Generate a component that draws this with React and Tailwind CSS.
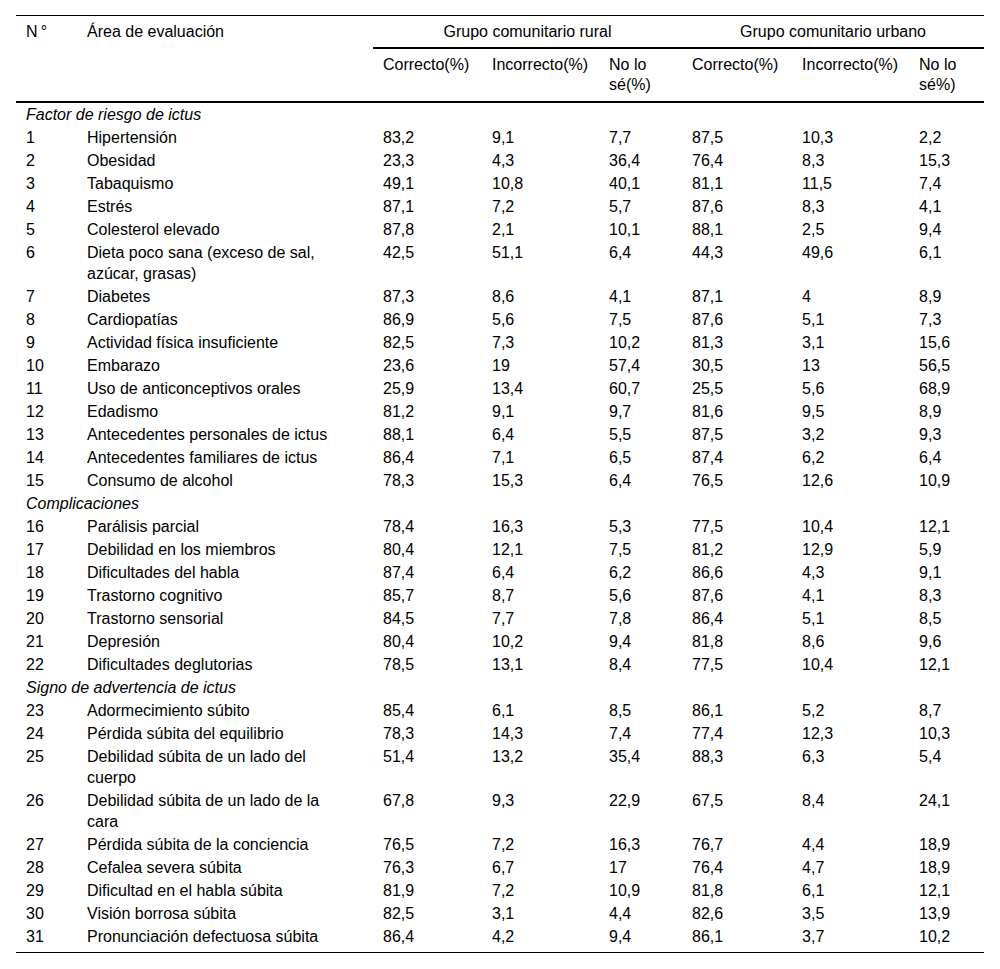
const sections = [
  {
    title: "Factor de riesgo de ictus",
    rows: [
      ["1", "Hipertensión", "83,2", "9,1", "7,7", "87,5", "10,3", "2,2"],
      ["2", "Obesidad", "23,3", "4,3", "36,4", "76,4", "8,3", "15,3"],
      ["3", "Tabaquismo", "49,1", "10,8", "40,1", "81,1", "11,5", "7,4"],
      ["4", "Estrés", "87,1", "7,2", "5,7", "87,6", "8,3", "4,1"],
      ["5", "Colesterol elevado", "87,8", "2,1", "10,1", "88,1", "2,5", "9,4"],
      ["6", "Dieta poco sana (exceso de sal, azúcar, grasas)", "42,5", "51,1", "6,4", "44,3", "49,6", "6,1"],
      ["7", "Diabetes", "87,3", "8,6", "4,1", "87,1", "4", "8,9"],
      ["8", "Cardiopatías", "86,9", "5,6", "7,5", "87,6", "5,1", "7,3"],
      ["9", "Actividad física insuficiente", "82,5", "7,3", "10,2", "81,3", "3,1", "15,6"],
      ["10", "Embarazo", "23,6", "19", "57,4", "30,5", "13", "56,5"],
      ["11", "Uso de anticonceptivos orales", "25,9", "13,4", "60,7", "25,5", "5,6", "68,9"],
      ["12", "Edadismo", "81,2", "9,1", "9,7", "81,6", "9,5", "8,9"],
      ["13", "Antecedentes personales de ictus", "88,1", "6,4", "5,5", "87,5", "3,2", "9,3"],
      ["14", "Antecedentes familiares de ictus", "86,4", "7,1", "6,5", "87,4", "6,2", "6,4"],
      ["15", "Consumo de alcohol", "78,3", "15,3", "6,4", "76,5", "12,6", "10,9"],
    ],
  },
  {
    title: "Complicaciones",
    rows: [
      ["16", "Parálisis parcial", "78,4", "16,3", "5,3", "77,5", "10,4", "12,1"],
      ["17", "Debilidad en los miembros", "80,4", "12,1", "7,5", "81,2", "12,9", "5,9"],
      ["18", "Dificultades del habla", "87,4", "6,4", "6,2", "86,6", "4,3", "9,1"],
      ["19", "Trastorno cognitivo", "85,7", "8,7", "5,6", "87,6", "4,1", "8,3"],
      ["20", "Trastorno sensorial", "84,5", "7,7", "7,8", "86,4", "5,1", "8,5"],
      ["21", "Depresión", "80,4", "10,2", "9,4", "81,8", "8,6", "9,6"],
      ["22", "Dificultades deglutorias", "78,5", "13,1", "8,4", "77,5", "10,4", "12,1"],
    ],
  },
  {
    title: "Signo de advertencia de ictus",
    rows: [
      ["23", "Adormecimiento súbito", "85,4", "6,1", "8,5", "86,1", "5,2", "8,7"],
      ["24", "Pérdida súbita del equilibrio", "78,3", "14,3", "7,4", "77,4", "12,3", "10,3"],
      ["25", "Debilidad súbita de un lado del cuerpo", "51,4", "13,2", "35,4", "88,3", "6,3", "5,4"],
      ["26", "Debilidad súbita de un lado de la cara", "67,8", "9,3", "22,9", "67,5", "8,4", "24,1"],
      ["27", "Pérdida súbita de la conciencia", "76,5", "7,2", "16,3", "76,7", "4,4", "18,9"],
      ["28", "Cefalea severa súbita", "76,3", "6,7", "17", "76,4", "4,7", "18,9"],
      ["29", "Dificultad en el habla súbita", "81,9", "7,2", "10,9", "81,8", "6,1", "12,1"],
      ["30", "Visión borrosa súbita", "82,5", "3,1", "4,4", "82,6", "3,5", "13,9"],
      ["31", "Pronunciación defectuosa súbita", "86,4", "4,2", "9,4", "86,1", "3,7", "10,2"],
    ],
  },
];

const subHeads = ["Correcto(%)", "Incorrecto(%)", "No lo sé(%)", "Correcto(%)", "Incorrecto(%)", "No lo sé%)"];

export default function App() {
  return (
    <div className="bg-white px-4 pt-[15px] pb-4 text-black font-['Liberation_Sans',Arial,sans-serif] text-[16px]">
      <table className="w-[968px] table-fixed border-collapse border-t border-black">
        <colgroup>
          <col className="w-[61px]" />
          <col className="w-[296px]" />
          <col className="w-[109px]" />
          <col className="w-[117px]" />
          <col className="w-[83px]" />
          <col className="w-[110px]" />
          <col className="w-[117px]" />
          <col className="w-[75px]" />
        </colgroup>
        <thead className="border-b-2 border-black">
          <tr>
            <th className="pl-2.5 pt-[5px] pb-[5px] text-left font-normal leading-[21px] align-top">N{"\u2009"}°</th>
            <th className="pl-2.5 pt-[5px] pb-[5px] text-left font-normal leading-[21px] align-top">Área de evaluación</th>
            <th colSpan={3} className="pt-[5px] pb-[5px] text-center font-normal leading-[21px] border-b-2 border-black">
              Grupo comunitario rural
            </th>
            <th colSpan={3} className="pt-[5px] pb-[5px] text-center font-normal leading-[21px] border-b-2 border-black">
              Grupo comunitario urbano
            </th>
          </tr>
          <tr>
            <th />
            <th />
            {subHeads.map((h, i) => (
              <th key={i} className="pl-2.5 pr-2 pt-[6px] pb-[6px] text-left font-normal leading-[20px] align-top">
                {h}
              </th>
            ))}
          </tr>
        </thead>
        <tbody>
          {sections.map((s, si) => (
            <Section key={s.title} section={s} last={si === sections.length - 1} />
          ))}
        </tbody>
      </table>
    </div>
  );
}

function Section({ section, last }) {
  return (
    <>
      <tr>
        <td colSpan={8} className="pl-2.5 py-px italic leading-[21px]">
          {section.title}
        </td>
      </tr>
      {section.rows.map((r, ri) => {
        const isLast = last && ri === section.rows.length - 1;
        return (
          <tr key={r[0]}>
            {r.map((c, ci) => (
              <td
                key={ci}
                className={`pl-2.5 pt-px leading-[21px] align-top ${ci === 1 ? "pr-6" : "pr-2"} ${
                  isLast ? "pb-[5px] border-b border-black" : "pb-px"
                }`}
              >
                {c}
              </td>
            ))}
          </tr>
        );
      })}
    </>
  );
}
